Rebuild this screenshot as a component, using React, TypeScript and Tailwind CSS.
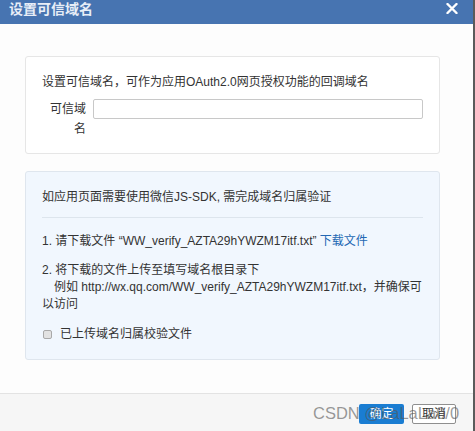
import React from 'react';

const font = { fontFamily: '"Liberation Sans", "Noto Sans CJK SC", sans-serif' };

export default function App() {
  return (
    <div className="flex h-[431px] w-[475px] overflow-hidden bg-[#5b5b5b] text-[12px] text-[#333]" style={font}>
      <div className="flex h-full w-[473px] flex-col bg-[#fdfdfd]">
        {/* header */}
        <div className="flex h-[24px] shrink-0 items-start justify-between bg-[#4774b1] pl-[9px] pr-[15px]">
          <span className="mt-[1px] text-[14px] font-bold leading-[16px] text-[#e8eef7]">设置可信域名</span>
          <svg className="mt-[3px]" width="12" height="11" viewBox="0 0 12 11">
            <path d="M1.5 1 L10.5 10 M10.5 1 L1.5 10" stroke="#fff" strokeWidth="2.4" strokeLinecap="round" />
          </svg>
        </div>

        {/* body */}
        <div className="flex flex-1 flex-col px-[25px] pt-[32px]">
          <div className="w-[415px] rounded-[3px] border border-[#e6e6e6] bg-white px-[16px] pb-[14px] pt-[15px]">
            <p className="leading-[20px]">设置可信域名，可作为应用OAuth2.0网页授权功能的回调域名</p>
            <div className="mt-[7px] flex items-start gap-[7px]">
              <label className="w-[44px] shrink-0 text-right leading-[20px]">可信域名</label>
              <input
                type="text"
                className="h-[20px] w-[331px] rounded-[2px] border border-[#c8c8c8] bg-white px-1 text-[12px] outline-none"
              />
            </div>
          </div>

          <div className="mt-[17px] w-[415px] rounded-[3px] border border-[#dfe6ee] bg-[#f1f7fe] px-[16px] pb-[16px] pt-[15px]">
            <p className="leading-[20px]">如应用页面需要使用微信JS-SDK, 需完成域名归属验证</p>
            <div className="mt-[10px] h-px bg-[#dde5ed]" />
            <p className="mt-[15px] leading-[17px]">
              1. 请下载文件 “WW_verify_AZTA29hYWZM17itf.txt” <a className="text-[#2367b3]">下载文件</a>
            </p>
            <p className="mt-[12px] leading-[17px]">
              2. 将下载的文件上传至填写域名根目录下
              <br />
              <span className="whitespace-nowrap">　例如 http://wx.qq.com/WW_verify_AZTA29hYWZM17itf.txt，并确保可</span>
              <br />
              以访问
            </p>
            <div className="mt-[13px] flex items-center leading-[17px]">
              <span className="ml-px h-[9px] w-[9px] rounded-[2px] border border-[#a9a9a9] bg-[#e2e2e2]" />
              <span className="ml-[8px]">已上传域名归属校验文件</span>
            </div>
          </div>
        </div>

        {/* footer */}
        <div className="relative flex h-[38px] shrink-0 items-start justify-end gap-[8px] border-t border-[#e3e3e3] bg-[#f6f6f6] pr-[17px] pt-[10px]">
          <button className="h-[20px] w-[45px] rounded-[2px] bg-[#1a7dd2] text-[12px] leading-[20px] text-white">确定</button>
          <button className="h-[20px] w-[44px] rounded-[2px] border border-[#8f8f8f] bg-white text-[12px] leading-[18px] text-[#333]">取消</button>
          <span className="pointer-events-none absolute left-[313px] top-[9px] text-[16.5px] leading-[20px] text-[#555]/60">
            CSDN @LaLaLa0/0
          </span>
        </div>
      </div>
    </div>
  );
}
